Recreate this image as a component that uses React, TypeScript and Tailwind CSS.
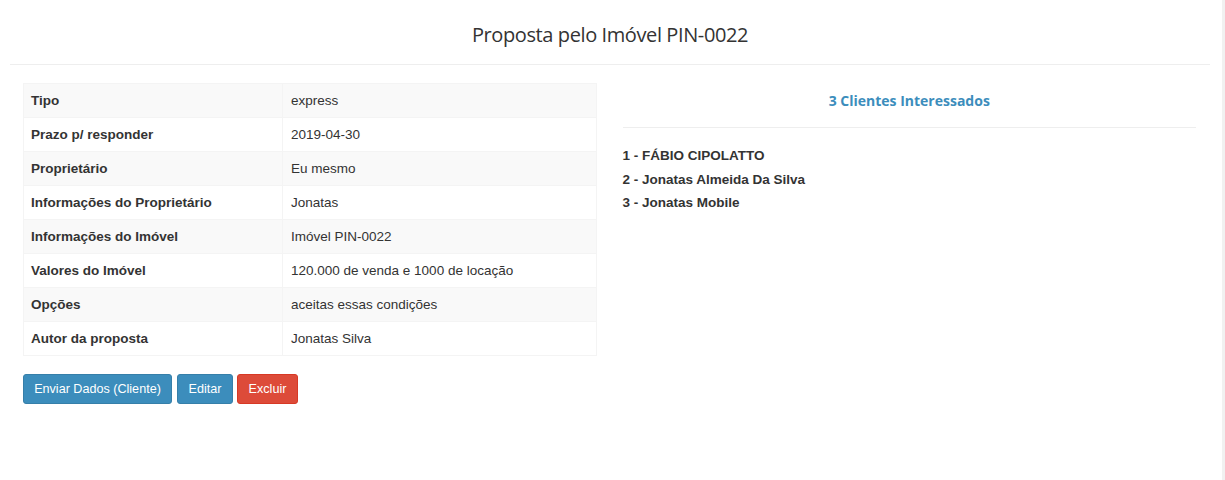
import React from "react";

const rows: [string, string][] = [
  ["Tipo", "express"],
  ["Prazo p/ responder", "2019-04-30"],
  ["Proprietário", "Eu mesmo"],
  ["Informações do Proprietário", "Jonatas"],
  ["Informações do Imóvel", "Imóvel PIN-0022"],
  ["Valores do Imóvel", "120.000 de venda e 1000 de locação"],
  ["Opções", "aceitas essas condições"],
  ["Autor da proposta", "Jonatas Silva"],
];

const clients = ["1 - FÁBIO CIPOLATTO", "2 - Jonatas Almeida Da Silva", "3 - Jonatas Mobile"];

export default function App() {
  return (
    <div className="relative w-[1225px] h-[480px] bg-white text-[#333] font-['Liberation_Sans',Arial,sans-serif] text-[13.5px] overflow-hidden">
      <div className="absolute right-0 top-0 h-full w-[3px] bg-[#f1f1f1]" />
      <div className="w-[1200px] ml-[10px]">
        <div className="h-[65px] border-b border-[#eeeeee] flex items-center justify-center pt-[6px]">
          <h1 className="font-['Open_Sans',sans-serif] text-[20px] tracking-[-0.4px] text-[#333]">Proposta pelo Imóvel PIN-0022</h1>
        </div>
        <div className="grid grid-cols-2 gap-[26px] pl-[13px] pr-[14px] pt-[18px]">
          <div>
            <table className="w-full border border-[#f4f4f4] border-collapse">
              <tbody>
                {rows.map(([k, v], i) => (
                  <tr key={k} className={i % 2 === 0 ? "bg-[#f9f9f9]" : "bg-white"}>
                    <td className="w-[259px] border border-[#f4f4f4] pl-[7px] pr-[8px] h-[34px] font-bold leading-[18px]">{k}</td>
                    <td className="border border-[#f4f4f4] px-[8px] h-[34px] leading-[18px]">{v}</td>
                  </tr>
                ))}
              </tbody>
            </table>
            <div className="flex mt-[18px]">
              <button className="h-[30px] w-[149px] rounded-[3px] bg-[#3c8dbc] border border-[#367fa9] text-white text-[12.6px]">Enviar Dados (Cliente)</button>
              <button className="h-[30px] w-[56px] ml-[5px] rounded-[3px] bg-[#3c8dbc] border border-[#367fa9] text-white text-[12.6px]">Editar</button>
              <button className="h-[30px] w-[61px] ml-[4px] rounded-[3px] bg-[#dd4b39] border border-[#d73925] text-white text-[12.6px]">Excluir</button>
            </div>
          </div>
          <div>
            <div className="h-[45px] border-b border-[#eeeeee] flex justify-center pt-[8px]">
              <h3 className="font-['Open_Sans',sans-serif] font-bold text-[14px] leading-[20px] text-[#3c8dbc]">3 Clientes Interessados</h3>
            </div>
            <ul className="pt-[19px] flex flex-col gap-[5.5px]">
              {clients.map((c) => (
                <li key={c} className="font-bold leading-[18px]">{c}</li>
              ))}
            </ul>
          </div>
        </div>
      </div>
    </div>
  );
}
